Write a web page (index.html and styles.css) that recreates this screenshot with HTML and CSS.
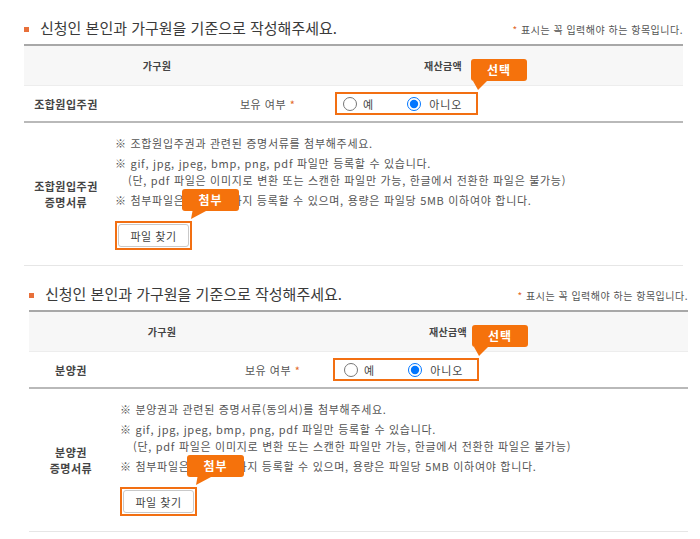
FILE: index.html
```html
<!DOCTYPE html>
<html lang="ko">
<head>
<meta charset="UTF-8">
<meta name="viewport" content="width=device-width, initial-scale=1.0">
<title>재산 보유 입력</title>
<link rel="stylesheet" href="styles.css">
</head>
<body>
    <section class="block">
        <div class="block-head">
            <h2 class="block-title">신청인 본인과 가구원을 기준으로 작성해주세요.</h2>
            <p class="required-note"><span class="star">*</span> 표시는 꼭 입력해야 하는 항목입니다.</p>
        </div>
        <div class="form-table">
            <div class="row row-head">
                <div class="th th-member">가구원</div>
                <div class="th th-amount">재산금액</div>
            </div>
            <div class="row row-own">
                <div class="label">조합원입주권</div>
                <div class="own-field">
                    <span class="own-label">보유 여부 <span class="star">*</span></span>
                    <span class="radio-box">
                        <label class="radio"><input type="radio" name="own1"> 예</label>
                        <label class="radio radio-no"><input type="radio" name="own1" checked> 아니오</label>
                        <span class="callout callout-select">선택</span>
                    </span>
                </div>
            </div>
            <div class="row row-file">
                <div class="label">조합원입주권<br>증명서류</div>
                <div class="file-field">
                    <p>※ 조합원입주권과 관련된 증명서류를 첨부해주세요.</p>
                    <p>※ gif, jpg, jpeg, bmp, png, pdf 파일만 등록할 수 있습니다.<br><span class="indent">(단, pdf 파일은 이미지로 변환 또는 스캔한 파일만 가능, 한글에서 전환한 파일은 불가능)</span></p>
                    <p>※ 첨부파일은 최대 5개까지 등록할 수 있으며, 용량은 파일당 5MB 이하여야 합니다.</p>
                    <span class="file-mark">
                        <button class="file-btn" type="button">파일 찾기</button>
                        <span class="callout callout-file">첨부</span>
                    </span>
                </div>
            </div>
        </div>
    </section>

    <section class="block block--second">
        <div class="block-head">
            <h2 class="block-title">신청인 본인과 가구원을 기준으로 작성해주세요.</h2>
            <p class="required-note"><span class="star">*</span> 표시는 꼭 입력해야 하는 항목입니다.</p>
        </div>
        <div class="form-table">
            <div class="row row-head">
                <div class="th th-member">가구원</div>
                <div class="th th-amount">재산금액</div>
            </div>
            <div class="row row-own">
                <div class="label">분양권</div>
                <div class="own-field">
                    <span class="own-label">보유 여부 <span class="star">*</span></span>
                    <span class="radio-box">
                        <label class="radio"><input type="radio" name="own2"> 예</label>
                        <label class="radio radio-no"><input type="radio" name="own2" checked> 아니오</label>
                        <span class="callout callout-select">선택</span>
                    </span>
                </div>
            </div>
            <div class="row row-file">
                <div class="label">분양권<br>증명서류</div>
                <div class="file-field">
                    <p>※ 분양권과 관련된 증명서류(동의서)를 첨부해주세요.</p>
                    <p>※ gif, jpg, jpeg, bmp, png, pdf 파일만 등록할 수 있습니다.<br><span class="indent">(단, pdf 파일은 이미지로 변환 또는 스캔한 파일만 가능, 한글에서 전환한 파일은 불가능)</span></p>
                    <p>※ 첨부파일은 최대 5개까지 등록할 수 있으며, 용량은 파일당 5MB 이하여야 합니다.</p>
                    <span class="file-mark">
                        <button class="file-btn" type="button">파일 찾기</button>
                        <span class="callout callout-file">첨부</span>
                    </span>
                </div>
            </div>
        </div>
    </section>
</body>
</html>
```

FILE: styles.css
```css
* {
    box-sizing: border-box;
}

body {
    margin: 0;
    background: #fff;
    color: #444;
    font-family: "Noto Sans CJK KR", "Noto Sans", sans-serif;
}

.block {
    padding: 0 17px 0 24px;
}

.block--second {
    padding: 0 12px 0 29px;
}

/* heading line */
.block-head {
    height: 44px;
    display: flex;
    justify-content: space-between;
}

.block-title {
    margin: 12px 0 0 0;
    display: flex;
    align-items: center;
    font-size: 15px;
    line-height: 22px;
    font-weight: 400;
    color: #3a3a3a;
}

.block-title::before {
    content: "";
    width: 5px;
    height: 5px;
    margin: 2px 11px 0 0;
    background: #e8703a;
}

.required-note {
    align-self: flex-end;
    margin: 0 0 7px 0;
    font-size: 10px;
    line-height: 14px;
    color: #555;
    letter-spacing: 0.5px;
}

.star {
    color: #e2692a;
}

/* table */
.form-table {
    border-top: 2px solid #a8a8a8;
}

.row {
    display: grid;
    grid-template-columns: 84px 1fr;
}

.row-head {
    display: flex;
    height: 40px;
    align-items: center;
    background: #f7f7f7;
    border-bottom: 1px solid #ededed;
}

.th {
    font-size: 10px;
    font-weight: 700;
    color: #444;
    text-align: center;
    letter-spacing: 0.3px;
}

.th-member {
    width: 266px;
}

.th-amount {
    width: 306px;
}

.label {
    align-self: center;
    text-align: center;
    font-size: 11px;
    line-height: 16px;
    font-weight: 700;
    color: #444;
    letter-spacing: 0.5px;
}

.row-own {
    height: 37px;
    border-bottom: 2px solid #b9b9b9;
}

.own-field {
    display: flex;
    align-items: center;
    padding-left: 132px;
}

.own-label {
    width: 95px;
    font-size: 11px;
    color: #555;
    letter-spacing: 0.5px;
}

.block--second .own-label {
    width: 88px;
}

.radio-box {
    position: relative;
    display: inline-flex;
    align-items: center;
    width: 143px;
    height: 23px;
    padding: 0 0 0 6px;
    border: 2px solid #f26f12;
}

.block--second .radio-box {
    width: 146px;
    padding-left: 9px;
}

.radio {
    display: inline-flex;
    align-items: center;
    gap: 6px;
    font-size: 11px;
    color: #444;
    letter-spacing: 1px;
}

.radio input {
    width: 14px;
    height: 14px;
    margin: 0;
}

.radio-no {
    margin-left: 33px;
    gap: 8px;
}

/* orange annotation bubbles */
.callout {
    position: absolute;
    height: 22px;
    line-height: 22px;
    text-align: center;
    background: #f5720c;
    color: #fff;
    font-size: 12px;
    font-weight: 700;
    border-radius: 3px;
    letter-spacing: 1px;
}

.callout::after {
    content: "";
    position: absolute;
    top: 100%;
    background: #f5720c;
}

.callout-select {
    width: 56px;
    left: calc(100% - 5px);
    bottom: calc(100% + 13px);
}

.callout-select::after {
    left: 2px;
    width: 14px;
    height: 9px;
    clip-path: polygon(0 0, 100% 0, 36% 100%);
}

.callout-file {
    width: 57px;
    left: 65px;
    bottom: calc(100% + 12px);
}

.callout-file::after {
    left: 9px;
    width: 15px;
    height: 8px;
    clip-path: polygon(10% 0, 100% 0, 0 100%);
}

/* file row */
.row-file {
    border-bottom: 1px solid #e6e6e6;
}

.file-field {
    padding: 12px 0 15px 7px;
    font-size: 11px;
    line-height: 17px;
    color: #555;
    letter-spacing: 0.7px;
}

.file-field p {
    margin: 0;
}

.file-field p + p {
    margin-top: 3px;
}

.indent {
    padding-left: 13px;
}

.file-mark {
    position: relative;
    display: inline-block;
    margin-top: 12px;
    padding: 1px;
    border: 2px solid #f26f12;
}

.file-btn {
    display: block;
    width: 71px;
    height: 23px;
    padding: 0;
    border: 1px solid #c9c9c9;
    border-radius: 3px;
    background: #fff;
    font-family: inherit;
    font-size: 11px;
    color: #444;
    letter-spacing: 0.5px;
}
```
